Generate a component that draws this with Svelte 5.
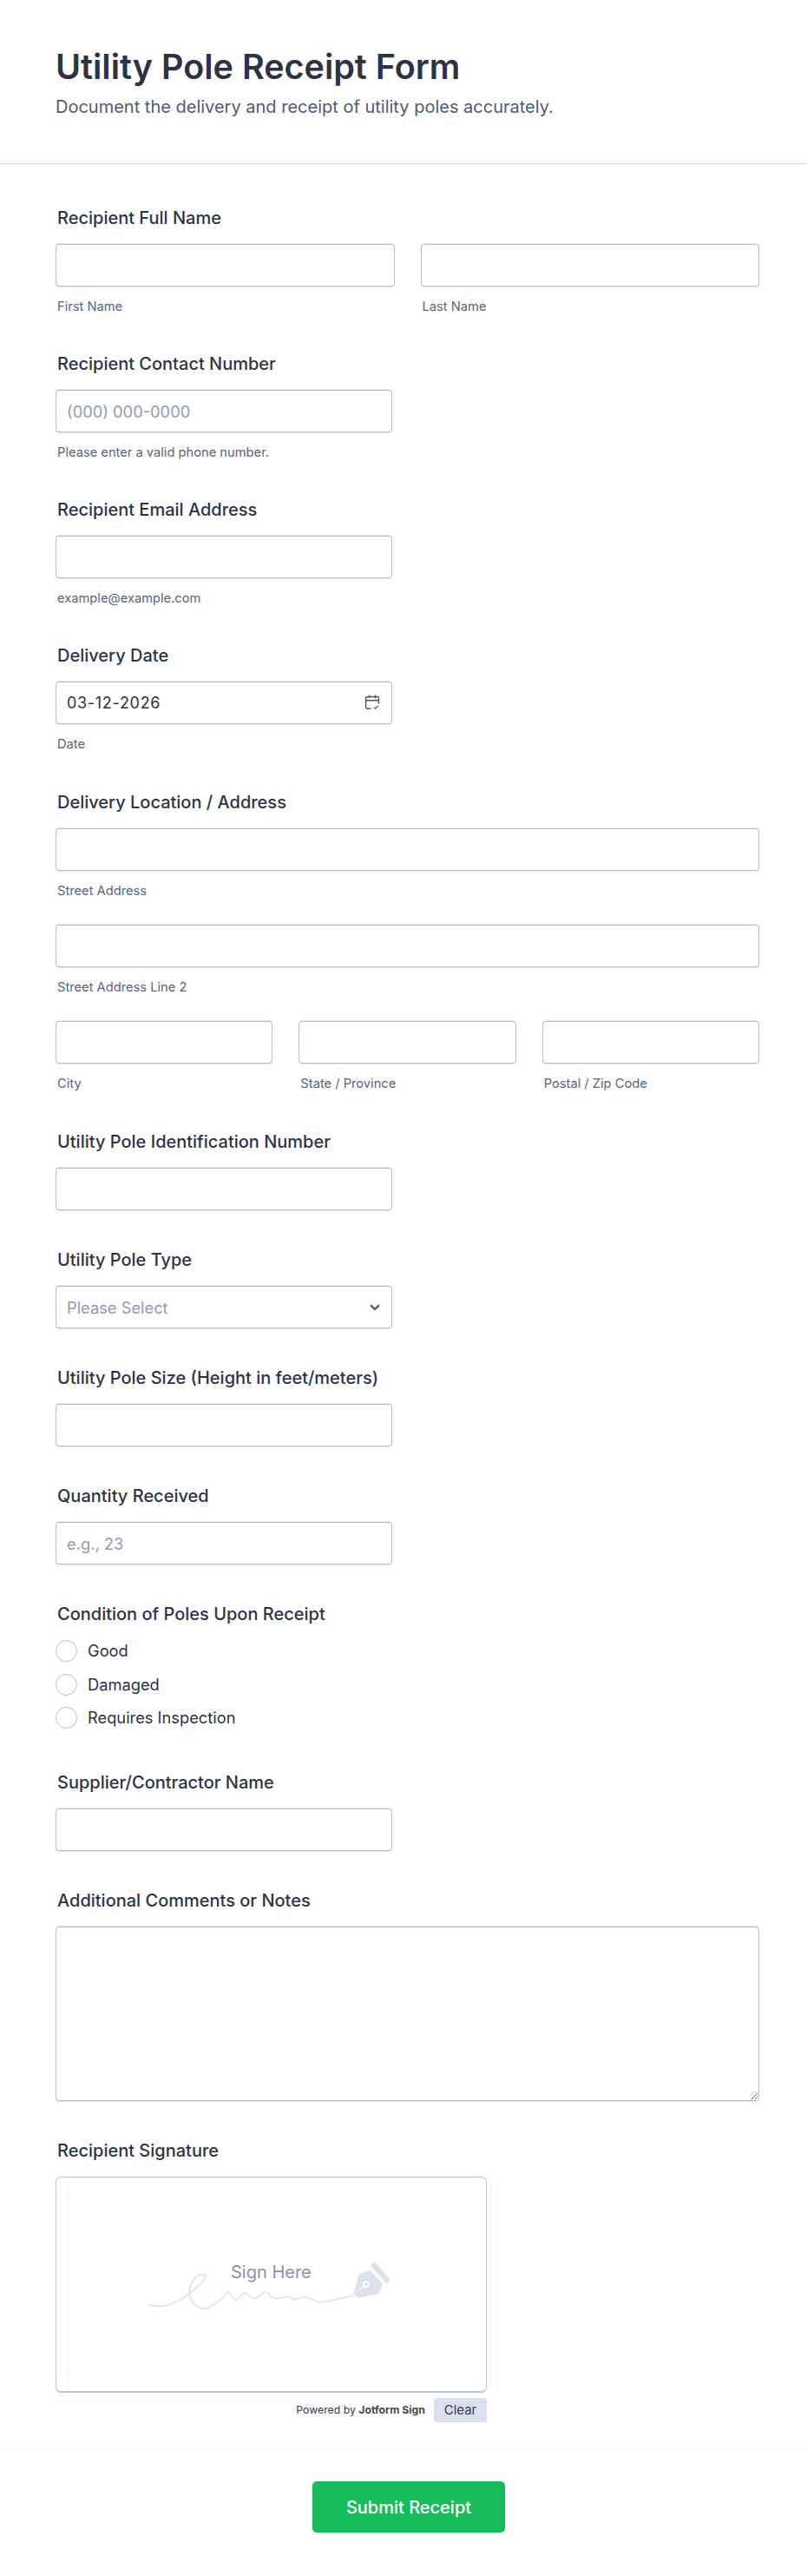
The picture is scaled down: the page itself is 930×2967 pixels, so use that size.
<script lang="ts">
  const conditions = ["Good", "Damaged", "Requires Inspection"];

  // points of the signature line, joined with a catmull-rom curve
  const scribblePoints = [
    [65, 255], [120, 258], [170, 238], [205, 215], [245, 180], [260, 158], [250, 148],
    [225, 160], [207, 195], [208, 230], [230, 258], [262, 267], [295, 250], [325, 225],
    [340, 208], [352, 225], [365, 238], [385, 220], [400, 212], [415, 225], [430, 232],
    [450, 222], [468, 208], [490, 228], [515, 232], [545, 225], [570, 235], [600, 228],
    [630, 235], [655, 245], [700, 238], [770, 222],
  ];

  function smoothPath(pts: number[][]) {
    let d = `M${pts[0][0]} ${pts[0][1]}`;
    for (let i = 0; i < pts.length - 1; i++) {
      const p0 = pts[Math.max(i - 1, 0)];
      const p1 = pts[i];
      const p2 = pts[i + 1];
      const p3 = pts[Math.min(i + 2, pts.length - 1)];
      const c1x = p1[0] + (p2[0] - p0[0]) / 6;
      const c1y = p1[1] + (p2[1] - p0[1]) / 6;
      const c2x = p2[0] - (p3[0] - p1[0]) / 6;
      const c2y = p2[1] - (p3[1] - p1[1]) / 6;
      d += `C${c1x} ${c1y} ${c2x} ${c2y} ${p2[0]} ${p2[1]}`;
    }
    return d;
  }

  const scribble = smoothPath(scribblePoints);

  let firstName = $state("");
  let lastName = $state("");
  let deliveryDate = $state("03-12-2026");
  let condition = $state("");
</script>

<form class="page" onsubmit={(e) => e.preventDefault()}>
  <header class="head">
    <h1>Utility Pole Receipt Form</h1>
    <p>Document the delivery and receipt of utility poles accurately.</p>
  </header>

  <div class="fields">
    <div class="field">
      <span class="label">Recipient Full Name</span>
      <div class="row two">
        <div>
          <input type="text" bind:value={firstName} />
          <span class="sub">First Name</span>
        </div>
        <div>
          <input type="text" bind:value={lastName} />
          <span class="sub">Last Name</span>
        </div>
      </div>
    </div>

    <div class="field">
      <span class="label">Recipient Contact Number</span>
      <div class="short">
        <input type="tel" placeholder="(000) 000-0000" />
        <span class="sub">Please enter a valid phone number.</span>
      </div>
    </div>

    <div class="field">
      <span class="label">Recipient Email Address</span>
      <div class="short">
        <input type="email" />
        <span class="sub">example@example.com</span>
      </div>
    </div>

    <div class="field">
      <span class="label">Delivery Date</span>
      <div class="short">
        <div class="with-icon">
          <input class="date-input" type="text" bind:value={deliveryDate} />
          <svg class="calendar" width="18" height="18" viewBox="0 0 18 18" fill="none" stroke="#4e5668" stroke-width="1.5" aria-hidden="true">
            <path d="M7.5 16.2H3.2a1.6 1.6 0 0 1-1.6-1.6V4.2a1.6 1.6 0 0 1 1.6-1.6h11.6a1.6 1.6 0 0 1 1.6 1.6v6.3" />
            <path d="M1.6 6.8h14.8M5.6.6v3.6M12.4.6v3.6" />
            <path d="M11 14.6l1.7 1.6 3.3-3.4" stroke-width="1.2" />
          </svg>
        </div>
        <span class="sub">Date</span>
      </div>
    </div>

    <div class="field address">
      <span class="label">Delivery Location / Address</span>
      <input type="text" />
      <span class="sub">Street Address</span>
      <input class="next-line" type="text" />
      <span class="sub">Street Address Line 2</span>
      <div class="row three next-line">
        <div>
          <input type="text" />
          <span class="sub">City</span>
        </div>
        <div>
          <input type="text" />
          <span class="sub">State / Province</span>
        </div>
        <div>
          <input type="text" />
          <span class="sub">Postal / Zip Code</span>
        </div>
      </div>
    </div>

    <div class="field">
      <span class="label">Utility Pole Identification Number</span>
      <div class="short"><input type="text" /></div>
    </div>

    <div class="field">
      <span class="label">Utility Pole Type</span>
      <div class="short with-icon">
        <select>
          <option>Please Select</option>
        </select>
        <svg class="chevron" width="12" height="8" viewBox="0 0 12 8" fill="none" stroke="#4c5674" stroke-width="2.2" aria-hidden="true">
          <path d="M1.2 1.4L6 6l4.8-4.6" />
        </svg>
      </div>
    </div>

    <div class="field">
      <span class="label">Utility Pole Size (Height in feet/meters)</span>
      <div class="short"><input type="text" /></div>
    </div>

    <div class="field">
      <span class="label">Quantity Received</span>
      <div class="short"><input type="text" placeholder="e.g., 23" /></div>
    </div>

    <div class="field">
      <span class="label">Condition of Poles Upon Receipt</span>
      <div class="radios">
        {#each conditions as item}
          <label class="radio">
            <input type="radio" name="condition" value={item} bind:group={condition} />
            <span>{item}</span>
          </label>
        {/each}
      </div>
    </div>

    <div class="field">
      <span class="label">Supplier/Contractor Name</span>
      <div class="short"><input type="text" /></div>
    </div>

    <div class="field">
      <span class="label">Additional Comments or Notes</span>
      <textarea></textarea>
    </div>

    <div class="field">
      <span class="label">Recipient Signature</span>
      <div class="signature">
        <div class="pad">
          <svg class="scribble" width="320" height="130" viewBox="0 0 960 390" aria-hidden="true">
            <defs>
              <pattern id="dots" width="9" height="9" patternUnits="userSpaceOnUse">
                <rect width="9" height="9" fill="#dbe0ed" />
                <circle cx="3" cy="3" r="1" fill="#f1f3f8" />
                <circle cx="7.5" cy="7.5" r="1" fill="#f1f3f8" />
              </pattern>
            </defs>
            <path d={scribble} fill="none" stroke="#dde2ef" stroke-width="5" stroke-linecap="round" />
            <path d="M845 104l55 64-14 12-56-62z" fill="url(#dots)" />
            <path d="M771 217l20-70 40-12 42 48-14 33-70 14z" fill="url(#dots)" />
            <circle cx="815" cy="183" r="12" fill="#fff" />
            <circle cx="815" cy="183" r="6" fill="#dbe0ed" />
            <path d="M772 216l36-26" stroke="#fff" stroke-width="3" />
          </svg>
          <span class="sign-here">Sign Here</span>
        </div>
        <div class="sign-foot">
          <span class="powered">Powered by <b>Jotform Sign</b></span>
          <button type="button" class="clear">Clear</button>
        </div>
      </div>
    </div>
  </div>

  <footer class="foot">
    <button type="submit" class="submit">Submit Receipt</button>
  </footer>
</form>

<style>
  :global(body) {
    background: #fff;
  }

  .page {
    display: flex;
    flex-direction: column;
    height: 2967px;
    font-family: Inter, "Liberation Sans", sans-serif;
    color: #2c3345;
  }

  .head {
    height: 189px;
    box-sizing: border-box;
    padding: 50px 64px 0;
    border-bottom: 1px solid #d8dae9;
  }

  h1 {
    margin: 0;
    font-size: 39.5px;
    line-height: 54px;
    font-weight: 600;
    color: #2c3345;
  }

  p {
    margin: 5px 0 0;
    font-size: 20px;
    line-height: 28px;
    color: #4f5b73;
  }

  .fields {
    padding: 51px 55px 0 64px;
    display: flex;
    flex-direction: column;
    gap: 46px;
  }

  .address {
    padding-top: 1px;
    padding-bottom: 1px;
  }

  .label {
    display: block;
    margin: 0 0 19px 2px;
    font-size: 20px;
    line-height: 22px;
    font-weight: 450;
    color: #2c3345;
  }

  input[type="text"],
  input[type="tel"],
  input[type="email"],
  select,
  textarea {
    display: block;
    width: 100%;
    height: 49px;
    box-sizing: border-box;
    margin: 0;
    padding: 0 12px;
    background: #fff;
    border: 1px solid #b8bdc9;
    border-radius: 4px;
    box-shadow: 0 -1px 0 #e6e8ef, 0 1px 0 #e6e8ef;
    font: 400 18.3px Inter, "Liberation Sans", sans-serif;
    color: #2c3345;
    outline: none;
  }

  input::placeholder {
    color: #8f9bb3;
    opacity: 1;
  }

  select {
    appearance: none;
    color: #8f9bb3;
  }

  textarea {
    height: 201px;
    padding: 12px;
  }

  input.date-input {
    font-size: 18px;
    letter-spacing: 0.7px;
  }

  .short {
    width: 388px;
  }

  .row {
    display: grid;
    column-gap: 30px;
  }

  .two {
    grid-template-columns: 1fr 1fr;
  }

  .three {
    grid-template-columns: repeat(3, 1fr);
  }

  .sub {
    display: block;
    margin: 15px 0 0 2px;
    font-size: 14.7px;
    line-height: 17px;
    color: #57647e;
  }

  input.next-line,
  .row.next-line {
    margin-top: 30px;
  }

  .with-icon {
    position: relative;
  }

  .calendar {
    position: absolute;
    top: 15px;
    right: 14px;
  }

  .chevron {
    position: absolute;
    top: 21px;
    right: 14px;
  }

  .radios {
    display: flex;
    flex-direction: column;
    gap: 13.5px;
    padding-bottom: 4.5px;
  }

  .radio {
    display: flex;
    align-items: center;
    gap: 12px;
    font-size: 18.3px;
    line-height: 25px;
    color: #2c3345;
  }

  .radio input {
    appearance: none;
    width: 25px;
    height: 25px;
    margin: 0;
    background: #fff;
    border: 1.5px solid #b8bdc9;
    border-radius: 50%;
  }

  .signature {
    width: 497px;
  }

  .pad {
    position: relative;
    height: 249px;
    box-sizing: border-box;
    border: 1px solid #b5c6de;
    border-bottom-width: 2px;
    border-radius: 6px;
  }

  .scribble {
    position: absolute;
    top: 62px;
    left: 85px;
  }

  .sign-here {
    position: absolute;
    top: 97px;
    left: 201px;
    font-size: 20px;
    line-height: 24px;
    color: #8594ad;
  }

  .sign-foot {
    display: flex;
    justify-content: flex-end;
    align-items: center;
    gap: 10px;
    margin-top: 6px;
  }

  .powered {
    font-size: 12.25px;
    color: #343c4e;
  }

  .powered b {
    font-weight: 700;
    color: #4c4a3f;
  }

  .clear {
    width: 61px;
    height: 28px;
    padding: 0;
    border: 0;
    border-radius: 4px;
    background: #dbe0ef;
    font: 400 15px Inter, "Liberation Sans", sans-serif;
    color: #343c56;
  }

  .foot {
    margin-top: auto;
    height: 147px;
    box-sizing: border-box;
    padding: 37px 0 0 12px;
    border-top: 1px solid #eceef5;
    display: flex;
    justify-content: center;
    align-items: flex-start;
  }

  .submit {
    width: 222px;
    height: 59px;
    border: 0;
    border-radius: 5px;
    background: #18bd5b;
    font: 500 20px Inter, "Liberation Sans", sans-serif;
    color: #fff;
  }
</style>
